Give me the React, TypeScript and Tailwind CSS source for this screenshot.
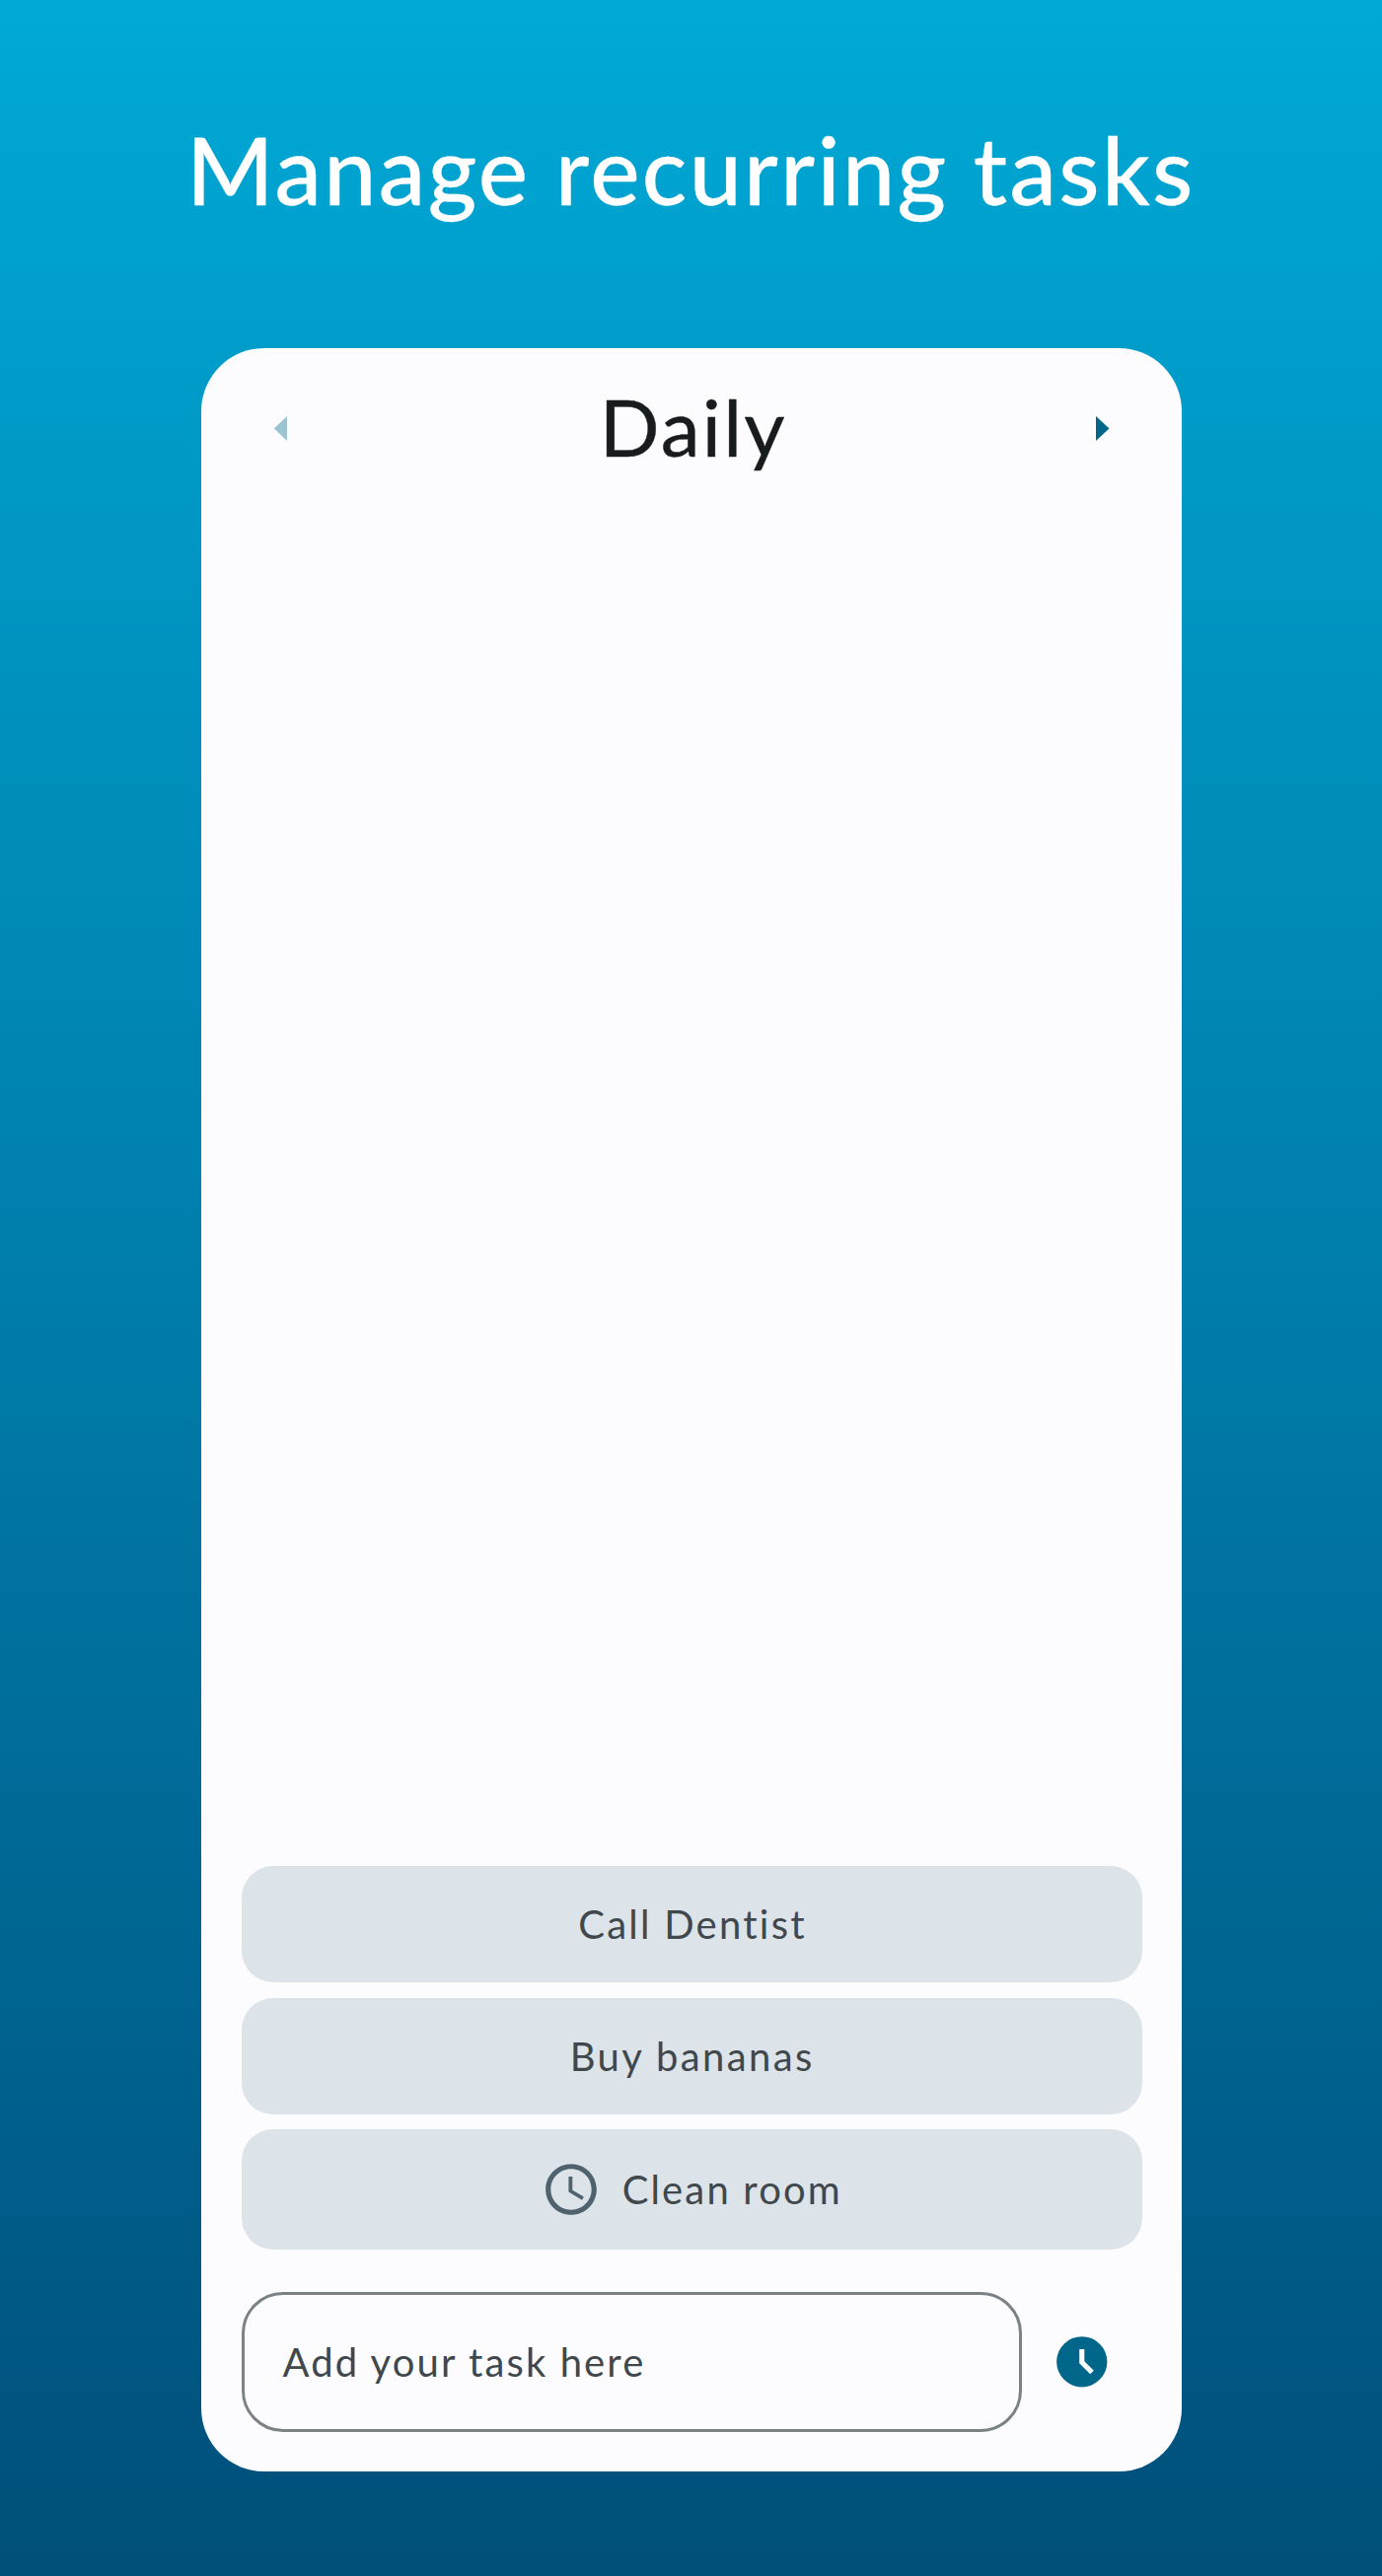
const tasks = [
  { label: 'Call Dentist', className: 'h-[118px] mb-[15.5px]', text: 'pl-[1.5px] tracking-[2.25px]' },
  { label: 'Buy bananas', className: 'h-[118px] mb-[15.5px]', text: 'pl-[1px] tracking-[2.4px]' },
  { label: 'Clean room', className: 'h-[121.5px]', text: 'tracking-[2.15px]', recurring: true },
];

function ClockOutline() {
  return (
    <svg className="mr-[21px] -ml-[1px] size-[62px] shrink-0" viewBox="0 0 24 24" fill="#4f636e">
      <path d="M11.99 2C6.47 2 2 6.48 2 12s4.47 10 9.99 10C17.52 22 22 17.52 22 12S17.52 2 11.99 2zM12 20c-4.42 0-8-3.58-8-8s3.58-8 8-8 8 3.58 8 8-3.58 8-8 8zm.5-13H11v6l5.25 3.15.75-1.23-4.5-2.67z" />
    </svg>
  );
}

function ClockFilled() {
  return (
    <svg className="size-[61.5px]" viewBox="0 0 24 24">
      <circle cx="12" cy="12" r="10" fill="#00668a" />
      <path d="M12 7v5.2l4 4" fill="none" stroke="#fcfcff" strokeWidth="2" />
    </svg>
  );
}

export default function App() {
  return (
    <main className="flex h-[2612px] w-[1401px] flex-col bg-linear-to-b from-[#00a9d6] via-[#007dab] to-[#004f7a] pt-[115px] font-['Lato',sans-serif]">
      <h1 className="ml-[189px] h-[120px] text-[95px] leading-[112px] font-medium tracking-[2.35px] whitespace-nowrap text-white [-webkit-text-stroke:0.3px_white] [word-spacing:-1px]">
        Manage recurring tasks
      </h1>
      <section className="mt-[118px] ml-[204px] flex h-[2153px] w-[994px] flex-col rounded-[64px] bg-[#fcfcff] pr-[40px] pl-[40.5px]">
        <header className="flex h-[162px] items-center justify-between pr-[33px] pl-[32px]">
          <svg className="h-[25px] w-[14px]" viewBox="0 0 14 25"><path d="M14 0v25L.8 12.5z" fill="#9bc3d2" /></svg>
          <h2 className="pb-[4px] pl-[4px] text-[80px] leading-[100px] tracking-[2.2px] text-[#191c1d] [-webkit-text-stroke:0.4px_#191c1d]">Daily</h2>
          <svg className="h-[25px] w-[14px]" viewBox="0 0 14 25"><path d="M0 0v25l13.5-12.5z" fill="#00668a" /></svg>
        </header>
        <div className="mt-[1377px] flex flex-col">
          {tasks.map((task) => (
            <button
              key={task.label}
              className={`flex w-full items-center justify-center rounded-[32px] bg-[#dce3e9] text-[40px] text-[#40484c] ${task.className}`}
            >
              {task.recurring && <ClockOutline />}
              <span className={task.text}>{task.label}</span>
            </button>
          ))}
        </div>
        <div className="mt-[43px] flex h-[142px] items-center">
          <div className="flex h-full w-[791.5px] items-center rounded-[42px] border-[3px] border-[#7a8286] pl-[39px] text-[40px] tracking-[2.1px] text-[#40484c]">
            Add your task here
          </div>
          <button className="ml-[30px]"><ClockFilled /></button>
        </div>
      </section>
    </main>
  );
}
